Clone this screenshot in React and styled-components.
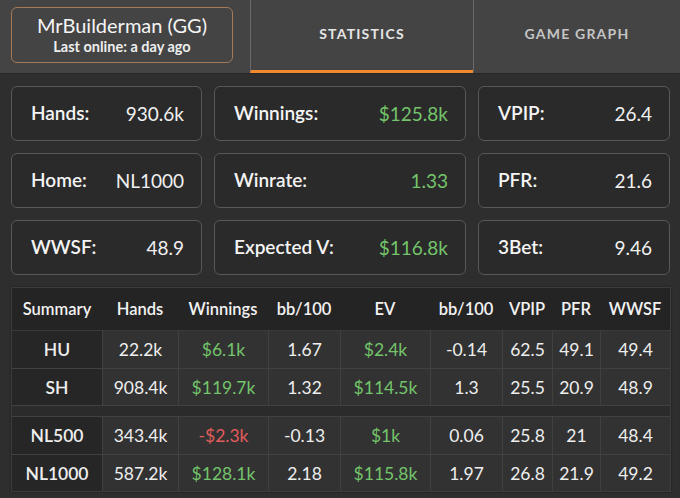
import styled, { createGlobalStyle } from "styled-components";

const Global = createGlobalStyle`
  body {
    margin: 0;
    background: #2e2e2e;
    font-family: Lato, "Open Sans", sans-serif;
    color: #f2f2f2;
  }
`;

const Screen = styled.div`
  width: 680px;
  height: 498px;
  overflow: hidden;
  background: #2e2e2e;
`;

const Header = styled.div`
  display: flex;
  height: 74px;
  background: #444444;
  border-bottom: 1px solid #262626;
  box-sizing: border-box;
`;

const ProfileSlot = styled.div`
  width: 250px;
  padding: 7px 17px 11px 11px;
  box-sizing: border-box;
`;

const Profile = styled.div`
  height: 56px;
  border: 1px solid #a57a58;
  border-radius: 6px;
  box-sizing: border-box;
  display: flex;
  flex-direction: column;
  align-items: center;
  justify-content: center;
`;

const Name = styled.div`
  font-size: 20px;
  line-height: 23px;
  color: #f4f4f4;
`;

const LastOnline = styled.div`
  font-size: 14.5px;
  font-weight: bold;
  line-height: 19px;
  color: #eeeeee;
`;

const Tab = styled.div`
  width: ${(p) => p.$w}px;
  border-left: 1px solid #6a6a6a;
  border-bottom: 3px solid ${(p) => (p.$active ? "#ef8b2c" : "transparent")};
  display: flex;
  align-items: center;
  justify-content: center;
  font-size: 14px;
  font-weight: bold;
  letter-spacing: 1.2px;
  color: ${(p) => (p.$active ? "#e6e6e6" : "#c4c4c4")};
  padding-bottom: 4px;
  box-sizing: border-box;
`;

const Cards = styled.div`
  display: grid;
  grid-template-columns: 191px 252px 192px;
  grid-auto-rows: 55px;
  column-gap: 12px;
  row-gap: 12px;
  padding: 12px 11px 0 11px;
`;

const Card = styled.div`
  border: 1px solid #585858;
  border-radius: 6px;
  background: #2a2a2a;
  display: flex;
  align-items: center;
  justify-content: space-between;
  padding: 0 17px 2px 19px;
`;

const Label = styled.span`
  font-size: 19px;
  font-weight: 600;
  color: #f4f4f4;
`;

const Value = styled.span`
  font-size: 19px;
  color: ${(p) => (p.$green ? "#74c46b" : "#f0f0f0")};
  padding-top: 2px;
`;

const Table = styled.div`
  margin: 12px 11px 0 11px;
  width: 658px;
  background: #303030;
  border: 1px solid #3c3c3c;
  box-shadow: 0 0 2px rgba(0, 0, 0, 0.4);
`;

const cols = "90px 76px 90px 72px 90px 72px 50px 48px 1fr";

const HeadRow = styled.div`
  display: grid;
  grid-template-columns: ${cols};
  height: 42px;
  background: #242424;
  border-bottom: 1px solid #3a3a3a;
`;

const HeadCell = styled.div`
  display: flex;
  align-items: center;
  justify-content: center;
  font-size: 16.5px;
  font-weight: 600;
  color: #f2f2f2;
`;

const Row = styled.div`
  display: grid;
  grid-template-columns: ${cols};
  height: 37px;
  border-top: ${(p) => (p.$first ? "none" : "1px solid #414141")};
  box-sizing: border-box;
`;

const Gap = styled.div`
  height: 10px;
  background: #2b2b2b;
  border-top: 1px solid #414141;
  border-bottom: 1px solid #414141;
`;

const Cell = styled.div`
  display: flex;
  align-items: center;
  justify-content: center;
  font-size: 17.5px;
  border-left: ${(p) => (p.$label ? "none" : "1px solid #414141")};
  background: ${(p) => (p.$label ? "#262626" : "#323232")};
  font-weight: ${(p) => (p.$label ? 600 : 400)};
  color: ${(p) =>
    p.$tone === "pos" ? "#74c46b" : p.$tone === "neg" ? "#e25c5c" : "#eeeeee"};
`;

const stats = [
  ["Hands:", "930.6k"],
  ["Winnings:", "$125.8k", true],
  ["VPIP:", "26.4"],
  ["Home:", "NL1000"],
  ["Winrate:", "1.33", true],
  ["PFR:", "21.6"],
  ["WWSF:", "48.9"],
  ["Expected V:", "$116.8k", true],
  ["3Bet:", "9.46"],
];

const heads = ["Summary", "Hands", "Winnings", "bb/100", "EV", "bb/100", "VPIP", "PFR", "WWSF"];

const groups = [
  [
    ["HU", "22.2k", "$6.1k", "1.67", "$2.4k", "-0.14", "62.5", "49.1", "49.4"],
    ["SH", "908.4k", "$119.7k", "1.32", "$114.5k", "1.3", "25.5", "20.9", "48.9"],
  ],
  [
    ["NL500", "343.4k", "-$2.3k", "-0.13", "$1k", "0.06", "25.8", "21", "48.4"],
    ["NL1000", "587.2k", "$128.1k", "2.18", "$115.8k", "1.97", "26.8", "21.9", "49.2"],
  ],
];

const tone = (v, i) => {
  if (i !== 2 && i !== 4) return undefined;
  return v.startsWith("-") ? "neg" : "pos";
};

export default function App() {
  return (
    <Screen>
      <Global />
      <Header>
        <ProfileSlot>
          <Profile>
            <Name>MrBuilderman (GG)</Name>
            <LastOnline>Last online: a day ago</LastOnline>
          </Profile>
        </ProfileSlot>
        <Tab $w={223} $active>
          STATISTICS
        </Tab>
        <Tab $w={207}>GAME GRAPH</Tab>
      </Header>
      <Cards>
        {stats.map(([l, v, g]) => (
          <Card key={l}>
            <Label>{l}</Label>
            <Value $green={g}>{v}</Value>
          </Card>
        ))}
      </Cards>
      <Table>
        <HeadRow>
          {heads.map((h, i) => (
            <HeadCell key={i}>{h}</HeadCell>
          ))}
        </HeadRow>
        {groups.map((rows, gi) => (
          <div key={gi}>
            {gi > 0 && <Gap />}
            {rows.map((r, ri) => (
              <Row key={r[0]} $first={ri === 0}>
                {r.map((v, i) => (
                  <Cell key={i} $label={i === 0} $tone={tone(v, i)}>
                    {v}
                  </Cell>
                ))}
              </Row>
            ))}
          </div>
        ))}
      </Table>
    </Screen>
  );
}
